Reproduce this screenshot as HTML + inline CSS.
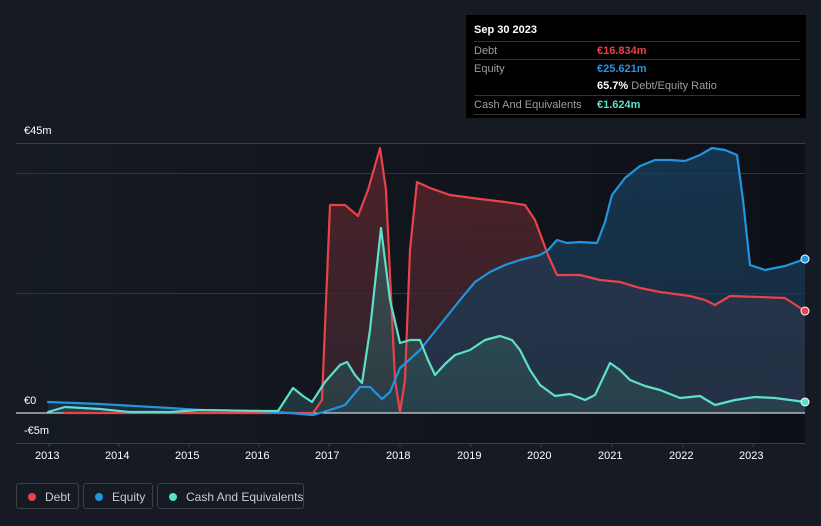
<!DOCTYPE html>
<html><head><meta charset="utf-8"><style>
html,body{margin:0;padding:0;background:#151a23;}
body{width:821px;height:526px;position:relative;overflow:hidden;font-family:"Liberation Sans",sans-serif;}
.tip{position:absolute;left:466px;top:15px;width:340px;height:103px;background:#000;color:#fff;font-size:11px;}
.tip .r{position:absolute;left:8px;right:6px;border-top:1px solid #333;height:18px;line-height:18px;color:#9a9ea6;}
.tip b{font-weight:bold;}
.leg{position:absolute;top:483px;height:26px;border:1px solid #3a3f4a;border-radius:3px;color:#c8ccd2;font-size:12px;line-height:26px;box-sizing:border-box;white-space:nowrap;}
.leg i{position:absolute;left:11px;top:9px;width:8px;height:8px;border-radius:50%;}
.leg span{position:absolute;left:28px;white-space:nowrap;}
.ax{position:absolute;font-size:11px;color:#fff;}
</style></head><body>
<svg width="821" height="526" style="position:absolute;left:0;top:0">
<defs>
<linearGradient id="bg" x1="0" x2="1" y1="0" y2="0"><stop offset="0" stop-color="#151a23"/><stop offset="0.6" stop-color="#10141c"/><stop offset="1" stop-color="#0d1016"/></linearGradient>
<linearGradient id="df" x1="0" x2="0" y1="0" y2="1"><stop offset="0" stop-color="#5a2228" stop-opacity="0.85"/><stop offset="1" stop-color="#3a2a35" stop-opacity="0.7"/></linearGradient>
<linearGradient id="ef" x1="0" x2="0" y1="0" y2="1"><stop offset="0" stop-color="#17405f" stop-opacity="0.75"/><stop offset="1" stop-color="#1d3a55" stop-opacity="0.6"/></linearGradient>
<linearGradient id="cf" x1="0" x2="0" y1="0" y2="1"><stop offset="0" stop-color="#3a6a66" stop-opacity="0.6"/><stop offset="1" stop-color="#2a4a4e" stop-opacity="0.6"/></linearGradient>
</defs>
<rect x="16" y="143" width="789" height="300" fill="url(#bg)"/>
<line x1="16" x2="805" y1="143.5" y2="143.5" stroke="#3a3e46"/>
<line x1="16" x2="805" y1="173.5" y2="173.5" stroke="#30343c"/>
<line x1="16" x2="805" y1="293.5" y2="293.5" stroke="#30343c"/>
<line x1="16" x2="805" y1="443.5" y2="443.5" stroke="#3a3e46"/>
<g stroke="#3a3e46"><line x1="49" x2="49" y1="443" y2="447"/><line x1="119" x2="119" y1="443" y2="447"/><line x1="189" x2="189" y1="443" y2="447"/><line x1="259" x2="259" y1="443" y2="447"/><line x1="329" x2="329" y1="443" y2="447"/><line x1="400" x2="400" y1="443" y2="447"/><line x1="471" x2="471" y1="443" y2="447"/><line x1="541" x2="541" y1="443" y2="447"/><line x1="612" x2="612" y1="443" y2="447"/><line x1="683" x2="683" y1="443" y2="447"/><line x1="753" x2="753" y1="443" y2="447"/></g>
<path fill="url(#df)" d="M65,413 L313,413 322,400 330,205 345,205 358,216 368,190 380,148 386,190 395,380 400,412 405,380 410,250 417,182 430,188 450,195 480,199 505,202 525,205 535,220 548,255 557,275 580,275 600,280 620,282 640,288 660,292 690,296 705,300 715,305 730,296 760,297 785,298 805,311 L805,413 Z"/>
<path fill="url(#ef)" d="M48,402 100,404 170,408 200,410 260,411 290,413 313,415 330,410 345,405 360,387 370,387 382,399 390,392 400,368 420,350 440,325 460,300 475,282 490,272 505,265 520,260 540,255 548,250 557,240 567,243 580,242 597,243 605,222 612,195 625,178 640,166 655,160 670,160 685,161 700,155 712,148 725,150 737,155 743,200 750,265 765,270 785,266 805,259 L805,413 48,413 Z"/>
<path fill="url(#cf)" d="M48,412 65,407 100,409 130,412 170,412 200,410 260,411 278,411 293,388 303,396 312,402 325,382 340,365 347,362 355,375 362,383 370,330 381,228 390,300 400,343 410,340 420,340 428,360 435,375 445,364 455,355 470,350 485,340 500,336 512,340 520,350 530,370 540,385 555,396 570,394 585,400 595,395 610,363 620,370 630,380 645,386 660,390 680,398 700,396 715,405 735,400 755,397 775,398 790,400 805,402 L805,413 Z"/>
<line x1="16" x2="805" y1="413" y2="413" stroke="#fff" stroke-width="1"/>
<g fill="none" stroke-width="2.2" stroke-linejoin="round" stroke-linecap="round">
<polyline stroke="#e8424a" points="65,413 313,413 322,400 330,205 345,205 358,216 368,190 380,148 386,190 395,380 400,412 405,380 410,250 417,182 430,188 450,195 480,199 505,202 525,205 535,220 548,255 557,275 580,275 600,280 620,282 640,288 660,292 690,296 705,300 715,305 730,296 760,297 785,298 805,311"/>
<polyline stroke="#2394e0" points="48,402 100,404 170,408 200,410 260,411 290,413 313,415 330,410 345,405 360,387 370,387 382,399 390,392 400,368 420,350 440,325 460,300 475,282 490,272 505,265 520,260 540,255 548,250 557,240 567,243 580,242 597,243 605,222 612,195 625,178 640,166 655,160 670,160 685,161 700,155 712,148 725,150 737,155 743,200 750,265 765,270 785,266 805,259"/>
<polyline stroke="#5ee0c8" points="48,412 65,407 100,409 130,412 170,412 200,410 260,411 278,411 293,388 303,396 312,402 325,382 340,365 347,362 355,375 362,383 370,330 381,228 390,300 400,343 410,340 420,340 428,360 435,375 445,364 455,355 470,350 485,340 500,336 512,340 520,350 530,370 540,385 555,396 570,394 585,400 595,395 610,363 620,370 630,380 645,386 660,390 680,398 700,396 715,405 735,400 755,397 775,398 790,400 805,402"/>
</g>
<circle cx="805" cy="259" r="4" fill="#2394e0" stroke="#fff" stroke-width="1"/>
<circle cx="805" cy="311" r="4" fill="#e8424a" stroke="#fff" stroke-width="1"/>
<circle cx="805" cy="402" r="4" fill="#5ee0c8" stroke="#fff" stroke-width="1"/>
</svg>
<div class="ax" style="left:24px;top:125px">€45m</div>
<div class="ax" style="left:24px;top:395px">€0</div>
<div class="ax" style="left:24px;top:425px">-€5m</div>
<div class="ax" style="left:35px;top:450px">2013</div><div class="ax" style="left:105px;top:450px">2014</div><div class="ax" style="left:175px;top:450px">2015</div><div class="ax" style="left:245px;top:450px">2016</div><div class="ax" style="left:315px;top:450px">2017</div><div class="ax" style="left:386px;top:450px">2018</div><div class="ax" style="left:457px;top:450px">2019</div><div class="ax" style="left:527px;top:450px">2020</div><div class="ax" style="left:598px;top:450px">2021</div><div class="ax" style="left:669px;top:450px">2022</div><div class="ax" style="left:739px;top:450px">2023</div>
<div class="tip">
<div style="position:absolute;left:8px;top:9px;font-weight:bold;color:#fff">Sep 30 2023</div>
<div class="r" style="top:26px">Debt<b style="position:absolute;left:123px;color:#e8424a">€16.834m</b></div>
<div class="r" style="top:44px">Equity<b style="position:absolute;left:123px;color:#2394e0">€25.621m</b></div>
<div class="r" style="top:62px;border-top:none"><span style="position:absolute;left:123px;color:#9a9ea6"><b style="color:#fff">65.7%</b> Debt/Equity Ratio</span></div>
<div class="r" style="top:80px;border-bottom:1px solid #333">Cash And Equivalents<b style="position:absolute;left:123px;color:#5ee0c8">€1.624m</b></div>
</div>
<div class="leg" style="left:16px;width:63px"><i style="background:#e8424a"></i><span>Debt</span></div>
<div class="leg" style="left:83px;width:70px"><i style="background:#2394e0"></i><span>Equity</span></div>
<div class="leg" style="left:157px;width:147px"><i style="background:#5ee0c8"></i><span>Cash And Equivalents</span></div>
</body></html>
